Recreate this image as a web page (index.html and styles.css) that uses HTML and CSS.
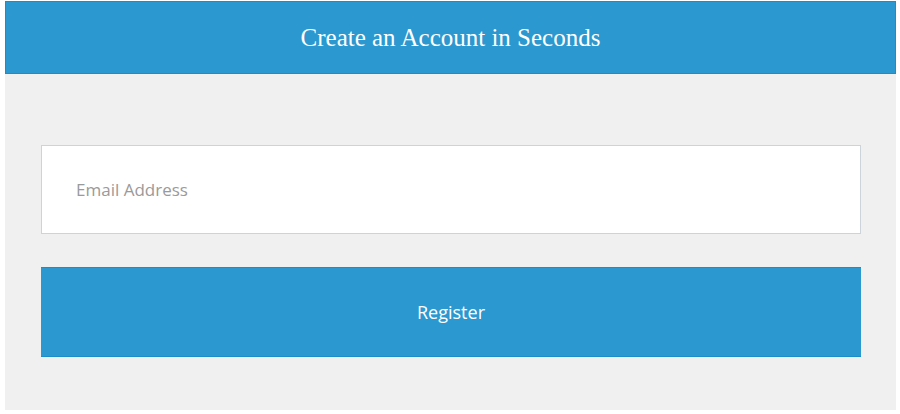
FILE: index.html
```html
<!DOCTYPE html>
<html lang="en">
<head>
    <meta charset="UTF-8">
    <meta name="viewport" content="width=device-width, initial-scale=1.0">
    <title>Create an Account</title>
    <link rel="stylesheet" href="styles.css">
</head>
<body>
    <div class="signup">
        <!-- Header -->
        <div class="signup-header">
            <h1>Create an Account in Seconds</h1>
        </div>

        <!-- Form -->
        <form class="signup-form" onsubmit="return false;">
            <input type="email" class="email-input" placeholder="Email Address">
            <button type="submit" class="register-btn">Register</button>
        </form>
    </div>
</body>
</html>
```

FILE: styles.css
```css
body {
    margin: 0;
    background: #ffffff;
    font-family: "Open Sans", Arial, sans-serif;
}

.signup {
    margin: 1px 4px 0 5px;
    background-color: #f0f0f0;
    height: 409px;
}

.signup-header {
    background-color: #2b98d0;
    border: 1px solid #1a8dcc;
    height: 71px;
    display: flex;
    align-items: center;
    justify-content: center;
}

.signup-header h1 {
    margin: 0;
    font-family: "Liberation Serif", "Times New Roman", serif;
    font-weight: normal;
    font-size: 25px;
    color: #ffffff;
}

.signup-form {
    display: flex;
    flex-direction: column;
    gap: 33px;
    padding: 71px 35px 0 36px;
}

.email-input {
    height: 89px;
    box-sizing: border-box;
    border: 1px solid #ccd3da;
    background: #ffffff;
    padding: 0 34px;
    font-family: "Open Sans", Arial, sans-serif;
    font-size: 17px;
    color: #555;
    outline: none;
}

.email-input::placeholder {
    color: #9a9a9a;
}

.register-btn {
    height: 90px;
    border: none;
    border-top: 1px solid #1a8dcc;
    border-bottom: 1px solid #1a8dcc;
    background-color: #2b98d0;
    color: #ffffff;
    font-family: "Open Sans", Arial, sans-serif;
    font-size: 18px;
    padding-bottom: 2px;
    cursor: pointer;
}
```
